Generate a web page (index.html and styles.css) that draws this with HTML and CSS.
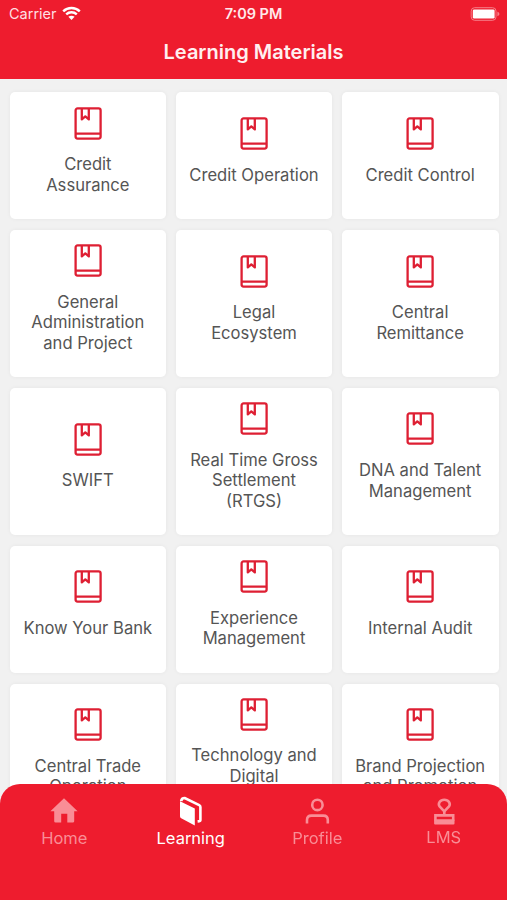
FILE: index.html
```html
<!DOCTYPE html>
<html lang="en">
<head>
    <meta charset="UTF-8">
    <meta name="viewport" content="width=device-width, initial-scale=1.0">
    <title>Learning Materials</title>
    <link rel="stylesheet" href="styles.css">
</head>
<body>
    <!-- Book icon shared by all cards -->
    <svg class="defs" width="0" height="0">
        <symbol id="book" viewBox="0 0 28 33">
            <rect x="1.6" y="1.4" width="25" height="30.2" rx="2"/>
            <path d="M1.6 26.6H26.6M7.8 1.4V12.4L11.3 9.4L14.8 12.4V1.4"/>
        </symbol>
    </svg>

    <header class="header">
        <div class="status-bar">
            <div class="carrier">
                <span>Carrier</span>
                <svg class="wifi" width="19" height="15" viewBox="0 0 19 15">
                    <path d="M1.2 5.4C5.8 .9 13.2 .9 17.8 5.4M4.2 8.4C7.2 5.6 11.8 5.6 14.8 8.4"/>
                    <path class="dot" d="M6.4 10.8C8.2 9.3 10.8 9.3 12.6 10.8L9.5 14Z"/>
                </svg>
            </div>
            <div class="time">7:09 PM</div>
            <div class="battery">
                <svg width="30" height="14" viewBox="0 0 30 14">
                    <rect class="shell" x="1.2" y=".7" width="24.8" height="12.6" rx="3.4"/>
                    <rect class="charge" x="2.8" y="2.4" width="21.8" height="9.2" rx="1.4"/>
                    <path class="cap" d="M27.4 4.8C30 5.5 30 8.5 27.4 9.2Z"/>
                </svg>
            </div>
        </div>
        <h1 class="title">Learning Materials</h1>
    </header>

    <main class="grid">
        <div class="card"><svg class="icon"><use href="#book"/></svg><p>Credit<br>Assurance</p></div>
        <div class="card"><svg class="icon"><use href="#book"/></svg><p>Credit Operation</p></div>
        <div class="card"><svg class="icon"><use href="#book"/></svg><p>Credit Control</p></div>

        <div class="card"><svg class="icon"><use href="#book"/></svg><p>General<br>Administration<br>and Project</p></div>
        <div class="card"><svg class="icon"><use href="#book"/></svg><p>Legal<br>Ecosystem</p></div>
        <div class="card"><svg class="icon"><use href="#book"/></svg><p>Central<br>Remittance</p></div>

        <div class="card"><svg class="icon"><use href="#book"/></svg><p>SWIFT</p></div>
        <div class="card"><svg class="icon"><use href="#book"/></svg><p>Real Time Gross<br>Settlement<br>(RTGS)</p></div>
        <div class="card"><svg class="icon"><use href="#book"/></svg><p>DNA and Talent<br>Management</p></div>

        <div class="card"><svg class="icon"><use href="#book"/></svg><p>Know Your Bank</p></div>
        <div class="card"><svg class="icon"><use href="#book"/></svg><p>Experience<br>Management</p></div>
        <div class="card"><svg class="icon"><use href="#book"/></svg><p>Internal Audit</p></div>

        <div class="card"><svg class="icon"><use href="#book"/></svg><p>Central Trade<br>Operation</p></div>
        <div class="card"><svg class="icon"><use href="#book"/></svg><p>Technology and<br>Digital<br>&nbsp;</p></div>
        <div class="card"><svg class="icon"><use href="#book"/></svg><p>Brand Projection<br>and Promotion</p></div>
    </main>

    <nav class="tab-bar">
        <a class="tab">
            <svg width="30" height="30" viewBox="0 0 30 30">
                <path class="fill" d="M15 2.3L28.6 15.2H25.2V25.2Q25.2 26.6 23.8 26.6H18.3V17.8H12.2V26.6H6.6Q5.2 26.6 5.2 25.2V15.2H1.4Z"/>
            </svg>
            <span>Home</span>
        </a>
        <a class="tab active">
            <svg width="30" height="30" viewBox="0 0 30 30">
                <path class="fill" d="M4 5.2L18.8 12.6V29.4L5.2 22.2Q4 21.6 4 20.2Z"/>
                <path class="line" d="M5.2 5.2Q5.4 2 8.8 2L23.2 9.2Q24.4 9.8 24.4 11V24.2Q24.4 25.2 21.6 25.4"/>
            </svg>
            <span>Learning</span>
        </a>
        <a class="tab">
            <svg width="30" height="30" viewBox="0 0 30 30">
                <circle class="line" cx="15.4" cy="8.9" r="5.2"/>
                <path class="line" d="M5 27.4V24Q5 19.6 9.4 19.6H21.4Q25.8 19.6 25.8 24V27.4"/>
            </svg>
            <span>Profile</span>
        </a>
        <a class="tab tab-lms">
            <svg width="30" height="30" viewBox="0 0 30 30">
                <path class="line" d="M15.3 15.4L10.6 10.4C8.6 7.6 11 3.8 15.3 3.8S22 7.6 20 10.4Z"/>
                <path class="line" d="M15.3 15V19M6.4 24.6V19.4H24.2V24.6"/>
                <rect class="fill" x="5.1" y="23.2" width="20.4" height="5.2" rx="1"/>
            </svg>
            <span>LMS</span>
        </a>
    </nav>
</body>
</html>
```

FILE: styles.css
```css
* {
    box-sizing: border-box;
}

body {
    margin: 0;
    height: 900px;
    background: #f1f1f1;
    color: #555;
    font-family: 'Inter', 'Liberation Sans', sans-serif;
    overflow: hidden;
}

.defs {
    position: absolute;
}

.header {
    height: 79px;
    background: #ee1c2e;
    color: #fff;
}

.status-bar {
    display: grid;
    grid-template-columns: 1fr auto 1fr;
    align-items: center;
    height: 27px;
    padding: 0 7px 0 9px;
    font-size: 14.5px;
}

.carrier {
    display: flex;
    align-items: center;
    gap: 5px;
    color: #ffdfe1;
}

.wifi {
    fill: none;
    stroke: #fff;
    stroke-width: 2.4;
}

.wifi .dot {
    fill: #fff;
    stroke: none;
}

.time {
    margin-right: 2px;
    font-weight: 600;
    color: #ffe9ea;
}

.battery {
    display: flex;
    justify-content: flex-end;
}

.shell {
    fill: none;
    stroke: #f67f89;
    stroke-width: 1;
}

.charge {
    fill: #fff;
}

.cap {
    fill: #f67f89;
}

.title {
    margin: 0;
    font-size: 20px;
    font-weight: 600;
    line-height: 51px;
    text-align: center;
    color: #ffeff0;
}

.grid {
    display: grid;
    grid-template-columns: repeat(3, 1fr);
    grid-template-rows: 127px 147px 147px 127px 147px;
    gap: 10.8px 9.5px;
    padding: 13.4px 8.5px 0 9.5px;
}

.card {
    display: flex;
    flex-direction: column;
    align-items: center;
    justify-content: center;
    background: #fff;
    border-radius: 5px;
    box-shadow: 0 0 4px rgba(0, 0, 0, 0.05);
}

.icon {
    width: 28px;
    height: 33px;
    fill: none;
    stroke: #de1f33;
    stroke-width: 2.3;
    stroke-linejoin: round;
}

.card p {
    margin: 14.6px 0 9.4px;
    font-size: 16.6px;
    line-height: 20.6px;
    text-align: center;
    white-space: nowrap;
}

/* Bottom tabs lie over the scrolled list */
.tab-bar {
    position: fixed;
    left: 0;
    right: 0;
    bottom: 0;
    display: grid;
    grid-template-columns: repeat(4, 1fr);
    height: 116px;
    padding: 12px 0 0 1px;
    background: #ee1c2e;
    border-radius: 20px 20px 0 0;
}

.tab {
    display: flex;
    flex-direction: column;
    align-items: center;
    font-size: 16.5px;
    line-height: 24px;
    color: #f98d96;
}

.tab.active {
    color: #fff;
}

.tab-lms {
    line-height: 22px;
}

.tab .fill {
    fill: currentColor;
}

.tab .line {
    fill: none;
    stroke: currentColor;
    stroke-width: 2.6;
}
```
